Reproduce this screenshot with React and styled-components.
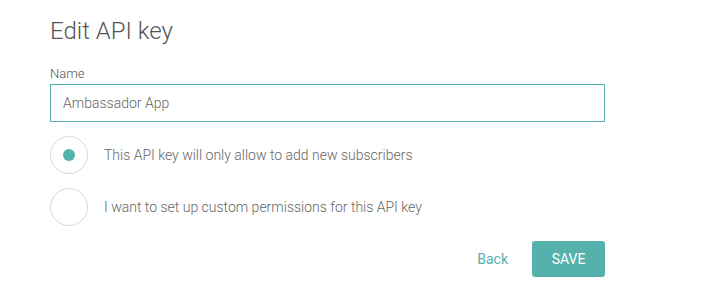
import React, { useState } from 'react'
import styled, { createGlobalStyle } from 'styled-components'

const GlobalStyle = createGlobalStyle`
  html, body {
    margin: 0;
    padding: 0;
    background: #fff;
  }
  body {
    font-family: Roboto, "Liberation Sans", sans-serif;
    -webkit-font-smoothing: antialiased;
  }
`

const Form = styled.form`
  width: 555px;
  padding: 17px 0 0 50px;
  display: flex;
  flex-direction: column;
`

const Title = styled.h2`
  margin: 0 0 21px;
  font-size: 24px;
  font-weight: 300;
  line-height: 28px;
  color: #555;
`

const Label = styled.label`
  font-size: 13px;
  font-weight: 300;
  line-height: 15px;
  color: #555;
  margin-bottom: 3px;
`

const Input = styled.input`
  box-sizing: border-box;
  width: 100%;
  height: 38px;
  border: 1px solid #55b1ab;
  border-radius: 0;
  padding: 0 12px;
  font-family: inherit;
  font-size: 14px;
  font-weight: 300;
  color: #666;
  outline: none;
  margin-bottom: 14px;
`

const Options = styled.div`
  display: flex;
  flex-direction: column;
  gap: 14px;
`

const Option = styled.label`
  display: flex;
  align-items: center;
  gap: 16px;
  cursor: pointer;
`

const Circle = styled.span`
  box-sizing: border-box;
  width: 38px;
  height: 38px;
  border-radius: 50%;
  border: 1px solid #d9d9d9;
  display: flex;
  align-items: center;
  justify-content: center;
  flex-shrink: 0;

  &::after {
    content: '';
    width: 12px;
    height: 12px;
    border-radius: 50%;
    background: ${p => (p.$checked ? '#55b1ab' : 'transparent')};
  }
`

const OptionText = styled.span`
  font-size: 14px;
  font-weight: 300;
  color: #666;
`

const Actions = styled.div`
  display: flex;
  justify-content: flex-end;
  align-items: center;
  gap: 24px;
  margin-top: 15px;
`

const LinkButton = styled.button`
  background: none;
  border: none;
  padding: 0;
  font-family: inherit;
  font-size: 14px;
  font-weight: 400;
  color: #55b1ab;
  cursor: pointer;
`

const SaveButton = styled.button`
  width: 73px;
  height: 36px;
  border: none;
  border-radius: 3px;
  background: #55b1ab;
  color: #fff;
  font-family: inherit;
  font-size: 14px;
  font-weight: 400;
  text-transform: uppercase;
  cursor: pointer;
`

const options = [
  { id: 'subscribers', text: 'This API key will only allow to add new subscribers' },
  { id: 'custom', text: 'I want to set up custom permissions for this API key' },
]

export default function App() {
  const [choice, setChoice] = useState('subscribers')
  return (
    <>
      <GlobalStyle />
      <Form onSubmit={e => e.preventDefault()}>
        <Title>Edit API key</Title>
        <Label htmlFor="name">Name</Label>
        <Input id="name" defaultValue="Ambassador App" />
        <Options>
          {options.map(o => (
            <Option key={o.id} onClick={() => setChoice(o.id)}>
              <Circle $checked={choice === o.id} />
              <OptionText>{o.text}</OptionText>
            </Option>
          ))}
        </Options>
        <Actions>
          <LinkButton type="button">Back</LinkButton>
          <SaveButton type="submit">Save</SaveButton>
        </Actions>
      </Form>
    </>
  )
}
